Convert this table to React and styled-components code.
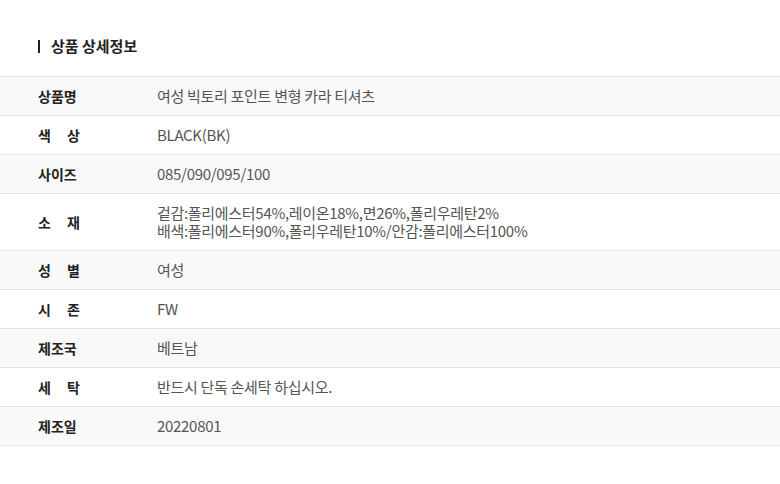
import React from "react";
import styled, { createGlobalStyle } from "styled-components";

const Global = createGlobalStyle`
  html, body { margin: 0; padding: 0; background: #fff; }
  body { font-family: "Noto Sans CJK KR", "Noto Sans", sans-serif; }
`;

const Wrap = styled.div`
  width: 780px;
  padding-top: 36px;
`;

const Title = styled.h3`
  margin: 0 0 20px 38px;
  display: flex;
  align-items: center;
  gap: 11px;
  font-size: 15px;
  font-weight: 700;
  color: #222;
  line-height: 20px;
`;

const Bar = styled.span`
  width: 2px;
  height: 13px;
  background: #222;
`;

const Table = styled.div`
  border-top: 1px solid #e2e2e2;
`;

const Row = styled.div`
  display: grid;
  grid-template-columns: 157px 1fr;
  align-items: center;
  padding: 10px 0;
  background: ${(p) => (p.$shaded ? "#f9f9f9" : "#fff")};
  border-bottom: 1px solid #e2e2e2;
`;

const Label = styled.div`
  padding-left: 38px;
  font-size: 14px;
  font-weight: 700;
  color: #222;
  line-height: 18px;
`;

const Spread = styled.span`
  display: inline-block;
  width: 42px;
  text-align: justify;
  text-align-last: justify;
`;

const Value = styled.div`
  font-size: 15px;
  color: #555;
  line-height: 18px;
  letter-spacing: -0.3px;
`;

const rows = [
  ["상품명", ["여성 빅토리 포인트 변형 카라 티셔츠"]],
  ["색 상", ["BLACK(BK)"]],
  ["사이즈", ["085/090/095/100"]],
  ["소 재", ["겉감:폴리에스터54%,레이온18%,면26%,폴리우레탄2%", "배색:폴리에스터90%,폴리우레탄10%/안감:폴리에스터100%"]],
  ["성 별", ["여성"]],
  ["시 존", ["FW"]],
  ["제조국", ["베트남"]],
  ["세 탁", ["반드시 단독 손세탁 하십시오."]],
  ["제조일", ["20220801"]],
];

export default function App() {
  return (
    <Wrap>
      <Global />
      <Title>
        <Bar />
        상품 상세정보
      </Title>
      <Table>
        {rows.map(([label, lines], i) => (
          <Row key={label} $shaded={i % 2 === 0}>
            <Label>
              {label.includes(" ") ? <Spread>{label}</Spread> : label}
            </Label>
            <Value>
              {lines.map((l) => (
                <div key={l}>{l}</div>
              ))}
            </Value>
          </Row>
        ))}
      </Table>
    </Wrap>
  );
}
